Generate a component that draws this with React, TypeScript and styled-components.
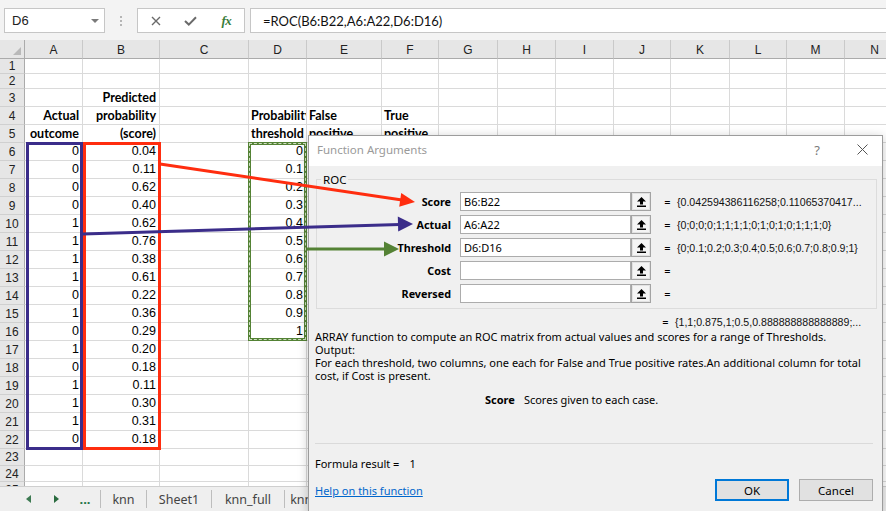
import React from 'react';
import styled, { createGlobalStyle } from 'styled-components';

const GlobalStyle = createGlobalStyle`
  html, body { margin: 0; padding: 0; background: #fff; overflow: hidden; }
  body { font-family: "Liberation Sans", Arial, sans-serif; }
  * { box-sizing: border-box; }
`;

const COL_TEMPLATE = '25px 58px 77px 89px 58px 75px 57px 59px 58px 58px 57px 59px 57px 58px 60px';
const COL_LETTERS = ['A', 'B', 'C', 'D', 'E', 'F', 'G', 'H', 'I', 'J', 'K', 'L', 'M', 'N'];

type CellDef = { t: string; a?: 'left' | 'right'; b?: boolean; f?: 'label' | 'num' };

const actual = [0, 0, 0, 0, 1, 1, 1, 1, 0, 1, 0, 1, 0, 1, 1, 1, 0];
const scores = ['0.04', '0.11', '0.62', '0.40', '0.62', '0.76', '0.38', '0.61', '0.22', '0.36', '0.29', '0.20', '0.18', '0.11', '0.30', '0.31', '0.18'];
const thresholds = ['0', '0.1', '0.2', '0.3', '0.4', '0.5', '0.6', '0.7', '0.8', '0.9', '1'];

const cells: Record<number, Record<number, CellDef>> = {
  3: { 1: { t: 'Predicted', a: 'right', b: true, f: 'label' } },
  4: {
    0: { t: 'Actual', a: 'right', b: true, f: 'label' },
    1: { t: 'probability', a: 'right', b: true, f: 'label' },
    3: { t: 'Probability', a: 'left', b: true, f: 'label' },
    4: { t: 'False', a: 'left', b: true, f: 'label' },
    5: { t: 'True', a: 'left', b: true, f: 'label' },
  },
  5: {
    0: { t: 'outcome', a: 'right', b: true, f: 'label' },
    1: { t: '(score)', a: 'right', b: true, f: 'label' },
    3: { t: 'threshold', a: 'left', b: true, f: 'label' },
    4: { t: 'positive', a: 'left', b: true, f: 'label' },
    5: { t: 'positive', a: 'left', b: true, f: 'label' },
  },
};
actual.forEach((v, i) => {
  const r = 6 + i;
  cells[r] = cells[r] || {};
  cells[r][0] = { t: String(v), a: 'right', f: 'num' };
  cells[r][1] = { t: scores[i], a: 'right', f: 'num' };
  if (i < thresholds.length) cells[r][3] = { t: thresholds[i], a: 'right', f: 'num' };
});

const rowHeight = (r: number) => (r <= 2 ? 15 : r <= 22 ? 18 : r === 23 ? 17 : 16);
const ROWS = Array.from({ length: 25 }, (_, i) => i + 1);

const Screen = styled.div`
  position: relative;
  width: 886px;
  height: 511px;
  overflow: hidden;
  display: flex;
  flex-direction: column;
  background: #fff;
`;

/* ---------- formula bar ---------- */
const FormulaBar = styled.div`
  height: 40px;
  flex: none;
  background: #f3f3f3;
  display: flex;
  align-items: flex-start;
  padding: 8px 0 0 4px;
`;
const NameBox = styled.div`
  width: 101px;
  height: 25px;
  background: #fff;
  border: 1px solid #c6c6c6;
  display: flex;
  align-items: center;
  justify-content: space-between;
  padding: 0 5px 0 7px;
  font-size: 13px;
  color: #222;
`;
const DropTri = styled.div`
  width: 0;
  height: 0;
  border-left: 4px solid transparent;
  border-right: 4px solid transparent;
  border-top: 4px solid #7a7a7a;
`;
const Grip = styled.div`
  width: 32px;
  height: 25px;
  display: flex;
  flex-direction: column;
  align-items: center;
  justify-content: center;
  gap: 2px;
`;
const GripDot = styled.div`
  width: 2px;
  height: 2px;
  background: #b5b5b5;
`;
const FxBox = styled.div`
  width: 108px;
  height: 25px;
  background: #fff;
  border: 1px solid #c6c6c6;
  display: flex;
  align-items: center;
`;
const FxItem = styled.div`
  width: 36px;
  height: 100%;
  display: flex;
  align-items: center;
  justify-content: center;
`;
const FxText = styled.span`
  font-family: "Liberation Serif", serif;
  font-style: italic;
  font-weight: bold;
  font-size: 13px;
  color: #3a7d3a;
  letter-spacing: -0.5px;
`;
const FormulaInput = styled.div`
  flex: 1;
  margin-left: 5px;
  height: 25px;
  background: #fff;
  border: 1px solid #c6c6c6;
  border-right: none;
  display: flex;
  align-items: center;
  padding-left: 12px;
  font-family: Lato, "Liberation Sans", sans-serif;
  font-size: 13px;
  color: #111;
`;

/* ---------- sheet ---------- */
const SheetArea = styled.div`
  flex: 1;
  min-height: 0;
  overflow: hidden;
  display: flex;
  flex-direction: column;
`;
const GridRow = styled.div<{ $h: number }>`
  display: grid;
  grid-template-columns: ${COL_TEMPLATE};
  height: ${(p) => p.$h}px;
  flex: none;
`;
const Corner = styled.div`
  background: #e6e6e6;
  border-right: 1px solid #ababab;
  border-bottom: 1px solid #ababab;
  display: flex;
  align-items: flex-end;
  justify-content: flex-end;
  padding: 0 3px 3px 0;
`;
const CornerTri = styled.div`
  width: 0;
  height: 0;
  border-left: 8px solid transparent;
  border-bottom: 8px solid #b9b9b9;
`;
const ColHead = styled.div`
  background: #e6e6e6;
  border-right: 1px solid #c9c9c9;
  border-bottom: 1px solid #ababab;
  display: flex;
  align-items: center;
  justify-content: center;
  font-size: 12px;
  color: #222;
  padding-top: 1px;
`;
const RowHead = styled.div`
  background: #e6e6e6;
  border-right: 1px solid #ababab;
  border-bottom: 1px solid #d0d0d0;
  display: flex;
  align-items: center;
  justify-content: center;
  font-size: 12px;
  color: #222;
  overflow: hidden;
`;
const Cell = styled.div<{ $align: 'left' | 'right'; $bold?: boolean; $font?: 'label' | 'num' }>`
  border-right: 1px solid #dadada;
  border-bottom: 1px solid #dadada;
  display: flex;
  align-items: flex-end;
  justify-content: ${(p) => (p.$align === 'right' ? 'flex-end' : 'flex-start')};
  padding: 0 3px 1px 2px;
  overflow: hidden;
  white-space: nowrap;
  line-height: 15px;
  font-family: ${(p) => (p.$font === 'label' ? 'Lato, "Liberation Sans", sans-serif' : '"Liberation Sans", Arial, sans-serif')};
  font-size: 12.5px;
  font-weight: ${(p) => (p.$bold ? 700 : 400)};
  color: #000;
`;

/* range highlight overlays */
const RangeBox = styled.div<{ $color: string }>`
  position: absolute;
  border: 3px solid ${(p) => p.$color};
  pointer-events: none;
  z-index: 1;
`;
const MarchingBox = styled(RangeBox)`
  &::after {
    content: '';
    position: absolute;
    inset: -2px;
    border: 1px dashed rgba(230, 240, 220, 0.85);
  }
`;

/* ---------- tab bar ---------- */
const TabBar = styled.div`
  height: 25px;
  flex: none;
  background: #efefef;
  border-top: 1px solid #cfcfcf;
  display: flex;
  align-items: center;
  font-family: "Noto Sans", "Open Sans", sans-serif;
  font-size: 12.5px;
  color: #444;
`;
const NavArea = styled.div`
  width: 100px;
  height: 100%;
  display: flex;
  align-items: center;
  padding-left: 14px;
`;
const NavBtn = styled.div<{ $w: number }>`
  width: ${(p) => p.$w}px;
  height: 100%;
  display: flex;
  align-items: center;
  justify-content: center;
  color: #217346;
  font-weight: bold;
  font-size: 13px;
`;
const TabSep = styled.div`
  width: 1px;
  height: 18px;
  background: #bdbdbd;
  flex: none;
`;
const Tab = styled.div<{ $w: number }>`
  width: ${(p) => p.$w}px;
  flex: none;
  text-align: center;
  white-space: nowrap;
  overflow: hidden;
`;

/* ---------- dialog ---------- */
const Dialog = styled.div`
  position: absolute;
  left: 308px;
  top: 135px;
  width: 575px;
  height: 380px;
  border: 1px solid #9c9c9c;
  background: #f0f0f0;
  box-shadow: 0 2px 10px rgba(0, 0, 0, 0.22);
  display: flex;
  flex-direction: column;
  font-family: "Noto Sans", "Open Sans", sans-serif;
  font-size: 11px;
  color: #000;
  z-index: 3;
`;
const TitleBar = styled.div`
  height: 30px;
  flex: none;
  background: #fff;
  display: flex;
  align-items: center;
  padding: 0 0 3px 8px;
`;
const TitleText = styled.div`
  flex: 1;
  font-size: 11.5px;
  color: #9a9a9a;
`;
const TitleBtn = styled.div<{ $w: number }>`
  width: ${(p) => p.$w}px;
  height: 100%;
  display: flex;
  align-items: center;
  justify-content: center;
  color: #7a7a7a;
  font-size: 13px;
`;
const Body = styled.div`
  flex: 1;
  display: flex;
  flex-direction: column;
  padding: 0 5px 0 6px;
`;
const GroupBox = styled.div`
  position: relative;
  margin: 13px 0 0 1px;
  height: 130px;
  border: 1px solid #dcdcdc;
  padding-top: 12px;
  display: flex;
  flex-direction: column;
  gap: 4px;
`;
const Legend = styled.span`
  position: absolute;
  left: 4px;
  top: -8px;
  padding: 0 2px;
  background: #f0f0f0;
  line-height: 15px;
  font-size: 11.5px;
`;
const ArgRow = styled.div`
  display: flex;
  align-items: center;
  height: 19px;
`;
const ArgLabel = styled.div`
  width: 134px;
  text-align: right;
  font-weight: 700;
  font-size: 10.8px;
`;
const ArgInput = styled.div`
  margin-left: 9px;
  width: 171px;
  height: 19px;
  background: #fff;
  border: 1px solid #acacac;
  display: flex;
  align-items: center;
  padding-left: 3px;
  font-size: 11px;
`;
const RefButton = styled.div`
  width: 20px;
  height: 19px;
  background: #f4f4f4;
  border: 1px solid #a3a3a3;
  box-shadow: inset 0 0 0 1px #e2e2e2;
  display: flex;
  align-items: center;
  justify-content: center;
`;
const EqSign = styled.div<{ $ml: number }>`
  margin-left: ${(p) => p.$ml}px;
  width: 7px;
  text-align: center;
`;
const ArgValue = styled.div`
  margin-left: 6px;
  white-space: nowrap;
  font-family: "Liberation Sans", Arial, sans-serif;
  font-size: 10.6px;
  color: #111;
`;
const ResultRow = styled.div`
  margin-top: 6px;
  height: 13px;
  display: flex;
  align-items: center;
  padding-left: 347px;
`;
const Description = styled.div`
  margin-top: 2px;
  line-height: 13px;
  white-space: nowrap;
`;
const ParamHelp = styled.div`
  margin-top: 11px;
  height: 13px;
  line-height: 13px;
  display: flex;
  padding-left: 170px;
`;
const ParamName = styled.span`
  font-weight: 700;
  margin-right: 9px;
`;
const Separator = styled.div`
  margin: 37px 4px 0 0;
  height: 1px;
  background: #dadada;
`;
const FormulaResult = styled.div`
  margin-top: 13px;
  line-height: 13px;
  height: 13px;
`;
const ResultValue = styled.span`
  margin-left: 10px;
`;
const Footer = styled.div`
  margin-top: 9px;
  height: 22px;
  display: flex;
  align-items: center;
  padding-right: 4px;
`;
const HelpLink = styled.span`
  color: #0066cc;
  text-decoration: underline;
  flex: 1;
`;
const DlgButton = styled.div<{ $primary?: boolean }>`
  width: 74px;
  height: 22px;
  margin-left: ${(p) => (p.$primary ? '0' : '10px')};
  background: #e1e1e1;
  border: ${(p) => (p.$primary ? '2px solid #0078d7' : '1px solid #adadad')};
  display: flex;
  align-items: center;
  justify-content: center;
  font-size: 11.5px;
`;

const Arrows = styled.svg`
  position: absolute;
  left: 0;
  top: 0;
  z-index: 4;
  pointer-events: none;
`;

const UpIcon = () => (
  <svg width="9" height="10" viewBox="0 0 9 10">
    <polygon points="4.5,0 9,4.5 6,4.5 6,7.5 3,7.5 3,4.5 0,4.5" fill="#000" />
    <rect x="0" y="8.5" width="9" height="1.5" fill="#000" />
  </svg>
);

const args = [
  { label: 'Score', input: 'B6:B22', value: '{0.042594386116258;0.11065370417...' },
  { label: 'Actual', input: 'A6:A22', value: '{0;0;0;0;1;1;1;1;0;1;0;1;0;1;1;1;0}' },
  { label: 'Threshold', input: 'D6:D16', value: '{0;0.1;0.2;0.3;0.4;0.5;0.6;0.7;0.8;0.9;1}' },
  { label: 'Cost', input: '', value: '' },
  { label: 'Reversed', input: '', value: '' },
];

export default function App() {
  return (
    <Screen>
      <GlobalStyle />
      <FormulaBar>
        <NameBox>
          <span>D6</span>
          <DropTri />
        </NameBox>
        <Grip>
          <GripDot />
          <GripDot />
          <GripDot />
        </Grip>
        <FxBox>
          <FxItem>
            <svg width="10" height="10" viewBox="0 0 10 10">
              <path d="M1 1 L9 9 M9 1 L1 9" stroke="#6a6a6a" strokeWidth="1.4" />
            </svg>
          </FxItem>
          <FxItem>
            <svg width="13" height="10" viewBox="0 0 13 10">
              <path d="M1 5 L4.8 8.6 L12 1.2" stroke="#6a6a6a" strokeWidth="2" fill="none" />
            </svg>
          </FxItem>
          <FxItem>
            <FxText>fx</FxText>
          </FxItem>
        </FxBox>
        <FormulaInput>=ROC(B6:B22,A6:A22,D6:D16)</FormulaInput>
      </FormulaBar>

      <SheetArea>
        <GridRow $h={19}>
          <Corner>
            <CornerTri />
          </Corner>
          {COL_LETTERS.map((c) => (
            <ColHead key={c}>{c}</ColHead>
          ))}
        </GridRow>
        {ROWS.map((r) => (
          <GridRow key={r} $h={rowHeight(r)}>
            <RowHead>{r}</RowHead>
            {COL_LETTERS.map((c, ci) => {
              const def = cells[r]?.[ci];
              return (
                <Cell key={c} $align={def?.a ?? 'left'} $bold={def?.b} $font={def?.f}>
                  {def?.t ?? ''}
                </Cell>
              );
            })}
          </GridRow>
        ))}
      </SheetArea>

      <TabBar>
        <NavArea>
          <NavBtn $w={28}>
            <svg width="5" height="8" viewBox="0 0 5 8">
              <polygon points="5,0 5,8 0,4" fill="#3d7a52" />
            </svg>
          </NavBtn>
          <NavBtn $w={28}>
            <svg width="5" height="8" viewBox="0 0 5 8">
              <polygon points="0,0 0,8 5,4" fill="#2a6b3f" />
            </svg>
          </NavBtn>
          <NavBtn $w={30}>...</NavBtn>
        </NavArea>
        <TabSep />
        <Tab $w={45}>knn</Tab>
        <TabSep />
        <Tab $w={64}>Sheet1</Tab>
        <TabSep />
        <Tab $w={72}>knn_full</Tab>
        <TabSep />
        <Tab $w={60}>knn_test</Tab>
      </TabBar>

      <RangeBox $color="#3b2d8a" style={{ left: 26, top: 142, width: 57, height: 308 }} />
      <RangeBox $color="#ff2d0f" style={{ left: 83, top: 142, width: 78, height: 308 }} />
      <MarchingBox $color="#548235" style={{ left: 248, top: 142, width: 59, height: 199 }} />

      <Dialog>
        <TitleBar>
          <TitleText>Function Arguments</TitleText>
          <TitleBtn $w={50}>?</TitleBtn>
          <TitleBtn $w={40}>
            <svg width="11" height="11" viewBox="0 0 11 11">
              <path d="M0.5 0.5 L10.5 10.5 M10.5 0.5 L0.5 10.5" stroke="#555" strokeWidth="1" />
            </svg>
          </TitleBtn>
        </TitleBar>
        <Body>
          <GroupBox>
            <Legend>ROC</Legend>
            {args.map((a) => (
              <ArgRow key={a.label}>
                <ArgLabel>{a.label}</ArgLabel>
                <ArgInput>{a.input}</ArgInput>
                <RefButton>
                  <UpIcon />
                </RefButton>
                <EqSign $ml={13}>=</EqSign>
                <ArgValue>{a.value}</ArgValue>
              </ArgRow>
            ))}
          </GroupBox>
          <ResultRow>
            <EqSign $ml={0}>=</EqSign>
            <ArgValue>{'{1,1;0.875,1;0.5,0.888888888888889;...'}</ArgValue>
          </ResultRow>
          <Description>
            ARRAY function to compute an ROC matrix from actual values and scores for a range of Thresholds.
            <br />
            Output:
            <br />
            For each threshold, two columns, one each for False and True positive rates.An additional column for total
            <br />
            cost, if Cost is present.
          </Description>
          <ParamHelp>
            <ParamName>Score</ParamName>
            <span>Scores given to each case.</span>
          </ParamHelp>
          <Separator />
          <FormulaResult>
            Formula result =<ResultValue>1</ResultValue>
          </FormulaResult>
          <Footer>
            <HelpLink>Help on this function</HelpLink>
            <DlgButton $primary>OK</DlgButton>
            <DlgButton>Cancel</DlgButton>
          </Footer>
        </Body>
      </Dialog>

      <Arrows width="886" height="511" viewBox="0 0 886 511">
        <line x1="160" y1="164" x2="402" y2="200" stroke="#ff2d0f" strokeWidth="3" />
        <polygon points="415,202 399.2,206.7 401.2,192.9" fill="#ff2d0f" />
        <line x1="83" y1="234" x2="400" y2="224.4" stroke="#3b2d8a" strokeWidth="3" />
        <polygon points="413,224 398.2,231.5 397.8,216.5" fill="#3b2d8a" />
        <line x1="307" y1="249" x2="386" y2="249" stroke="#548235" strokeWidth="3" />
        <polygon points="399,249 384,256.5 384,241.5" fill="#548235" />
      </Arrows>
    </Screen>
  );
}
